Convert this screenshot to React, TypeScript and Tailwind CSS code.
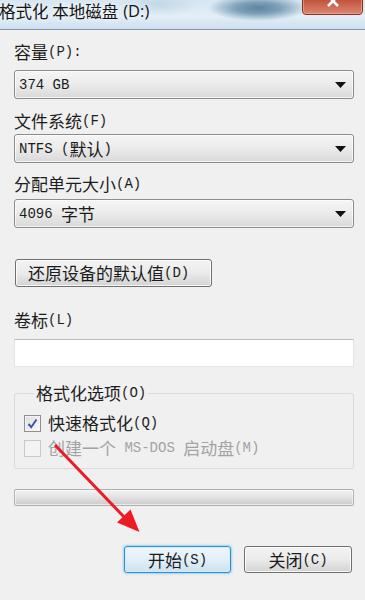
import React from 'react';

const cjk = "font-['Noto_Sans_CJK_SC',sans-serif] text-[17px]";
const mono = "font-['Liberation_Mono','Noto_Sans_CJK_SC',monospace] text-[14px]";

// split a label into CJK runs and latin runs, each gets its own font
const Mixed = ({ s }: { s: string }) => {
  const parts = s.match(/[\u4e00-\u9fff]+|[^\u4e00-\u9fff]+/g) || [];
  return (
    <>
      {parts.map((p, i) =>
        /[\u4e00-\u9fff]/.test(p) ? (
          <span key={i} className={cjk}>
            {p}
          </span>
        ) : (
          <span key={i} className={`${mono} whitespace-pre`}>
            {p}
          </span>
        )
      )}
    </>
  );
};

const Combo = ({ value, className }: { value: string; className: string }) => (
  <div
    className={`${className} h-[29px] flex items-center justify-between pl-[4px] pr-[7px] rounded-[3px] border border-[#8b8c8c] bg-gradient-to-b from-[#f5f5f5] via-[#ebebeb] to-[#d9d9d9] shadow-[inset_0_0_0_1px_rgba(255,255,255,0.7)] text-[#1b1b1b] leading-[20px]`}
  >
    <div className="flex items-center">
      <Mixed s={value} />
    </div>
    <svg width="11" height="6" viewBox="0 0 11 6">
      <path d="M0 0 H11 L5.5 6 Z" fill="#111" />
    </svg>
  </div>
);

const Label = ({ s, className }: { s: string; className: string }) => (
  <div className={`${className} h-[20px] leading-[20px] flex items-center text-[#1e1e1e]`}>
    <Mixed s={s} />
  </div>
);

const CheckBox = ({ checked, disabled }: { checked?: boolean; disabled?: boolean }) => (
  <div
    className={`w-[17px] h-[17px] flex items-center justify-center border ${
      disabled
        ? 'border-[#c9c9c9] bg-[#f3f3f3]'
        : 'border-[#8e8f8f] bg-gradient-to-br from-[#dedede] to-[#fafafa] shadow-[inset_0_0_0_1px_#f4f4f4]'
    }`}
  >
    {checked && (
      <svg width="13" height="13" viewBox="0 0 13 13">
        <path d="M2.5 7 L5.2 10.2 L10.5 2.5" fill="none" stroke="#3a57a6" strokeWidth="2" />
      </svg>
    )}
  </div>
);

export default function App() {
  return (
    <div className="relative w-[365px] h-[600px] overflow-hidden bg-[#f0f0f0]">
      {/* title bar */}
      <div className="relative h-[30px] border-b border-[#8796a6] bg-[radial-gradient(ellipse_50px_13px_at_258px_8px,#5d849f_0%,#7ea1b8_45%,transparent_100%),radial-gradient(ellipse_40px_12px_at_160px_4px,#c3d8e8,transparent),linear-gradient(to_bottom,#d7e6f2,#e3eef7_55%,#cddff0)]">
        <div className="absolute left-[-1px] top-[1px] flex items-center h-[20px] text-[#151515] [text-shadow:0_0_6px_#ffffff]">
          <span className="font-['Noto_Sans_CJK_SC',sans-serif] text-[16.5px]">格式化 本地磁盘</span>
          <span className="font-['Open_Sans',sans-serif] text-[16.5px] ml-[5px]">(D:)</span>
        </div>
        <div className="absolute left-[302px] top-[-2px] w-[61px] h-[17px] rounded-b-[4px] border border-[#8a3222] bg-gradient-to-b from-[#c04f3a] to-[#dc8672] shadow-[inset_0_0_0_1px_rgba(255,210,200,0.4)] flex justify-center overflow-hidden">
          <svg width="16" height="12" viewBox="0 0 16 12" className="mt-[-3px]">
            <path d="M3 0 L8 5 L13 0 M3 10 L8 5 L13 10" stroke="#ffffff" strokeWidth="2.6" fill="none" />
          </svg>
        </div>
      </div>

      {/* body */}
      <div className="flex flex-col pl-[14px] pr-[11px]">
        <Label s="容量(P):" className="mt-[12px]" />
        <Combo value="374 GB" className="mt-[8px]" />
        <Label s="文件系统(F)" className="mt-[12px]" />
        <Combo value="NTFS (默认)" className="mt-[3px]" />
        <Label s="分配单元大小(A)" className="mt-[11px]" />
        <Combo value="4096 字节" className="mt-[5px]" />

        <div className="mt-[31px] ml-[1px] w-[197px] h-[28px] flex items-center pl-[12px] rounded-[3px] border border-[#707070] bg-gradient-to-b from-[#f3f3f3] via-[#ebebeb] to-[#d3d3d3] shadow-[inset_0_0_0_1px_rgba(255,255,255,0.8)] text-[#1b1b1b] leading-[20px]">
          <Mixed s="还原设备的默认值(D)" />
        </div>

        <Label s="卷标(L)" className="mt-[23px]" />
        <div className="mt-[9px] h-[28px] bg-white border border-[#dfe4ea] border-t-[#b6bcc4]" />

        <fieldset className="mt-[16px] border border-[#d5dbe0] rounded-[3px] pl-[9px] pb-[10px]">
          <legend className="ml-[10px] px-[2px] h-[20px] leading-[20px] flex items-center text-[#1e1e1e]">
            <Mixed s="格式化选项(O)" />
          </legend>
          <div className="mt-[10px] h-[20px] flex items-center gap-[7px] text-[#1e1e1e] leading-[20px]">
            <CheckBox checked />
            <div className="flex items-center">
              <Mixed s="快速格式化(Q)" />
            </div>
          </div>
          <div className="mt-[5px] h-[20px] flex items-center gap-[7px] text-[#a3a3a3] leading-[20px]">
            <CheckBox disabled />
            <div className="flex items-center">
              <Mixed s="创建一个 MS-DOS 启动盘(M)" />
            </div>
          </div>
        </fieldset>

        <div className="mt-[20px] h-[17px] rounded-[2px] border border-[#b0b0b0] bg-gradient-to-b from-[#f2f2f2] via-[#e2e2e2] to-[#cbcbcb] shadow-[inset_0_0_0_1px_rgba(255,255,255,0.6)]" />

        <div className="mt-[40px] flex justify-end gap-[13px] mr-[2px]">
          <div className="w-[107px] h-[27px] flex items-center justify-center rounded-[3px] border border-[#3d8cc7] bg-gradient-to-b from-[#eef6fc] via-[#e3eff8] to-[#cde2f1] shadow-[0_0_2px_1px_#98d3f5,inset_0_0_0_1px_#cdeefd] text-[#1b1b1b] leading-[20px]">
            <Mixed s="开始(S)" />
          </div>
          <div className="w-[108px] h-[27px] flex items-center justify-center rounded-[3px] border border-[#707070] bg-gradient-to-b from-[#f3f3f3] via-[#ebebeb] to-[#d3d3d3] shadow-[inset_0_0_0_1px_rgba(255,255,255,0.8)] text-[#1b1b1b] leading-[20px]">
            <Mixed s="关闭(C)" />
          </div>
        </div>
      </div>

      {/* red annotation arrow */}
      <svg className="absolute inset-0 pointer-events-none" width="365" height="600" viewBox="0 0 365 600">
        <line x1="55" y1="445" x2="126" y2="519" stroke="#ec1c24" strokeWidth="3" />
        <path d="M139.5 532 L117 522.5 L130.5 509.5 Z" fill="#ec1c24" />
      </svg>
    </div>
  );
}
